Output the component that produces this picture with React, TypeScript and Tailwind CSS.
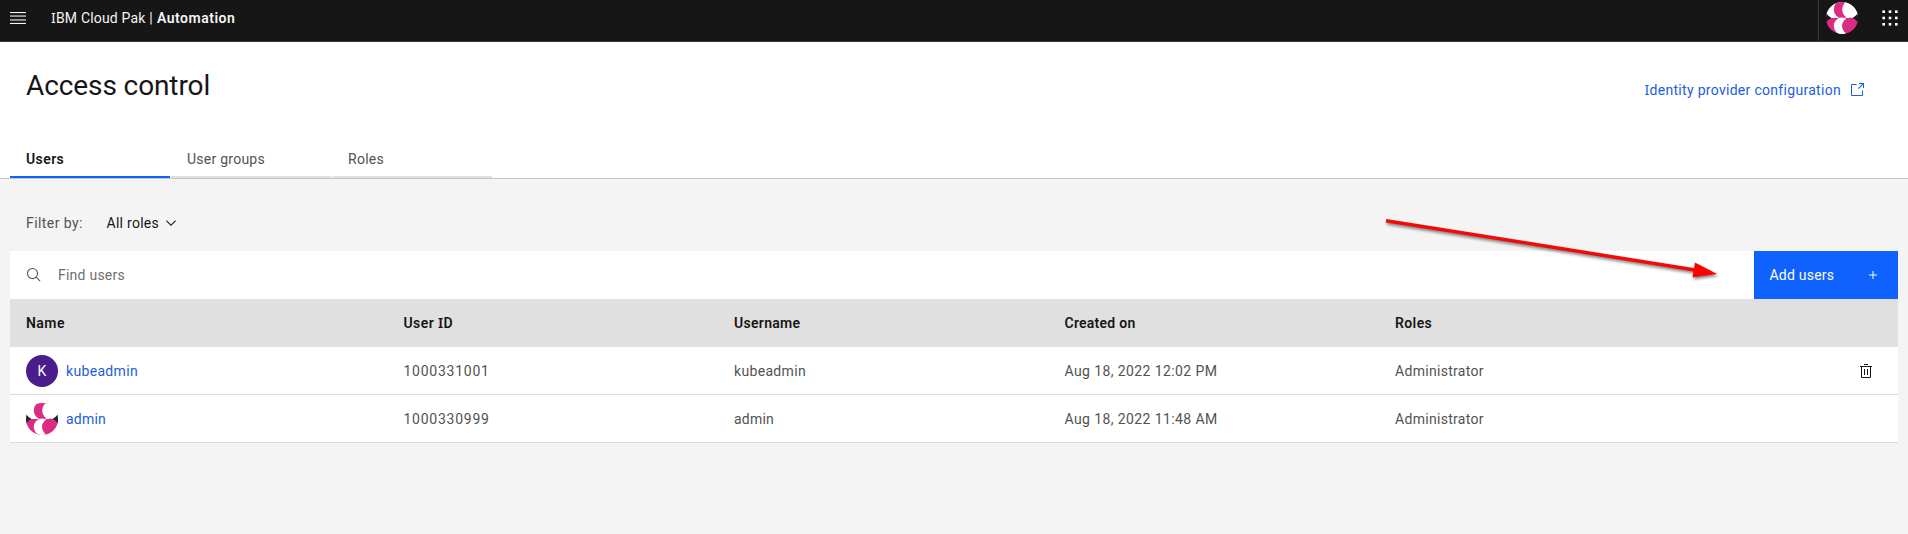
import React from "react";

function SerifI() {
  return <span className="font-['Noto_Sans',sans-serif] leading-none">I</span>;
}

function MenuIcon() {
  return (
    <svg className="h-4 w-4" viewBox="0 0 16 16" fill="#f4f4f4">
      <path d="M0 2h16v1.1H0z" />
      <path d="M0 5.5h16v1.1H0z" />
      <path d="M0 9.4h16v1.1H0z" />
      <path d="M0 12.9h16V14H0z" />
    </svg>
  );
}

function SwitcherIcon() {
  const steps = [0.4, 6.7, 13];
  return (
    <svg className="h-4 w-4" viewBox="0 0 16 16" fill="#ffffff">
      {steps.map((y) => steps.map((x) => <rect key={`${x}-${y}`} x={x} y={y} width="2.6" height="2.6" />))}
    </svg>
  );
}

function LaunchIcon() {
  return (
    <svg className="h-4 w-4" viewBox="0 0 32 32" fill="currentColor">
      <path d="M26 28H6a2 2 0 0 1-2-2V6a2 2 0 0 1 2-2h9v2H6v20h20v-9h2v9a2 2 0 0 1-2 2z" />
      <path d="M20 2v2h6.59L18 12.59 19.41 14 28 5.41V12h2V2H20z" />
    </svg>
  );
}

function ChevronIcon() {
  return (
    <svg className="h-4 w-4" viewBox="0 0 16 16" fill="#161616">
      <path d="M8 11L3 6l.7-.7L8 9.6l4.3-4.3.7.7z" />
    </svg>
  );
}

function SearchIcon() {
  return (
    <svg className="h-4 w-4" viewBox="0 0 32 32" fill="#525252">
      <path d="M29 27.586l-7.552-7.552a11.018 11.018 0 1 0-1.414 1.414L27.586 29zM4 13a9 9 0 1 1 9 9 9.01 9.01 0 0 1-9-9z" />
    </svg>
  );
}

function AddIcon() {
  return (
    <svg className="h-4 w-4" viewBox="0 0 32 32" fill="#ffffff">
      <path d="M17 15V8h-2v7H8v2h7v7h2v-7h7v-2z" />
    </svg>
  );
}

function TrashIcon() {
  return (
    <svg className="h-4 w-4" viewBox="0 0 32 32" fill="#161616">
      <path d="M12 12h2v12h-2zM18 12h2v12h-2z" />
      <path d="M4 6v2h2v20a2 2 0 0 0 2 2h16a2 2 0 0 0 2-2V8h2V6zm4 22V8h16v20zM12 2h8v2h-8z" />
    </svg>
  );
}

function Avatar({ id, wedge }: { id: string; wedge: string }) {
  return (
    <svg className="h-8 w-8 shrink-0" viewBox="0 0 32 32">
      <clipPath id={id}>
        <circle cx="16" cy="16" r="16" />
      </clipPath>
      <g clipPath={`url(#${id})`}>
        <rect width="32" height="16" fill="#ffffff" />
        <rect y="16" width="32" height="16" fill="#da2c82" />
        <ellipse cx="16.2" cy="7.4" rx="8.4" ry="9" fill="#da2c82" />
        <ellipse cx="24.6" cy="7.4" rx="8.4" ry="9.2" fill="#ffffff" />
        <ellipse cx="16" cy="24" rx="8.2" ry="8.4" fill="#ffffff" />
        <ellipse cx="24.4" cy="24" rx="8.4" ry="8.6" fill="#da2c82" />
        <path d="M-1 9.5Q1.5 14 5.5 16Q2 17-1 22.5z" fill={wedge} />
        <path d="M33 9.5Q30.5 14 26.5 16Q30 17 33 22.5z" fill={wedge} />
      </g>
    </svg>
  );
}

const grid = "grid grid-cols-[377.5px_330.5px_330.5px_330.5px_1fr]";

function Row({ avatar, name, link, id, created, trash }: { avatar: React.ReactNode; name: string; link: string; id: string; created: string; trash?: boolean }) {
  return (
    <div className={`${grid} h-12 items-center border-b border-[#dcdcdc] bg-white text-[#525252]`}>
      <div className="flex items-center gap-2 pl-4">
        {avatar}
        <a className={link}>{name}</a>
      </div>
      <div className="pl-4 tracking-[0.75px]">{id}</div>
      <div className={`pl-4 ${name === "admin" ? "tracking-[0.2px]" : "tracking-[0.33px]"}`}>{name}</div>
      <div className="pl-4 tracking-[0.4px]">{created}</div>
      <div className="flex items-center justify-between pl-4 pr-6">
        <span className="tracking-[0.3px]">Administrator</span>
        {trash && <TrashIcon />}
      </div>
    </div>
  );
}

export default function App() {
  return (
    <div className="relative flex h-[534px] w-[1908px] flex-col overflow-hidden bg-[#f4f4f4] font-['Roboto',sans-serif] text-sm text-[#161616]">
      <header className="flex h-[42px] items-start border-b border-[#393939] bg-[#161616] text-[#f4f4f4]">
        <div className="flex h-9 items-center pl-[10px]">
          <MenuIcon />
          <span className="ml-[25px] w-[106px] tracking-[0.18px]">
            <SerifI />BM Cloud Pak |
          </span>
          <span className="font-semibold tracking-[0.5px]">Automation</span>
        </div>
        <div className="ml-auto flex h-full items-start border-l border-[#393939]">
          <div className="flex h-[34px] items-end pl-[7px]">
            <Avatar id="header-avatar" wedge="#16191b" />
          </div>
          <div className="flex h-9 items-center pl-6 pr-[10px]">
            <SwitcherIcon />
          </div>
        </div>
      </header>

      <section className="flex h-[137px] flex-col justify-between border-b border-[#c6c6c6] bg-white">
        <div className="flex items-start justify-between pl-[26px] pr-[43px]">
          <h1 className="pt-[26px] text-[28px] leading-9 tracking-[-0.1px]">Access control</h1>
          <a className="flex items-center gap-2 pt-[38px] text-[#1b60dd]">
            <span className="tracking-[0.3px]">
              <SerifI />dentity provider configuration
            </span>
            <LaunchIcon />
          </a>
        </div>
        <nav className="flex gap-px pl-[10px] text-[#525252]">
          <div className="h-[29px] w-40 border-b-2 border-[#0f62fe] pl-4 font-semibold tracking-[0.4px] text-[#161616]">Users</div>
          <div className="h-[29px] w-40 border-b-2 border-[#e0e0e0] pl-4 tracking-[0.25px]">User groups</div>
          <div className="h-[29px] w-40 border-b-2 border-[#e0e0e0] pl-4 tracking-[0.26px]">Roles</div>
        </nav>
      </section>

      <main className="flex flex-col px-[10px]">
        <div className="flex h-[72px] items-center pl-4 pt-[16px]">
          <span className="w-[80.5px] tracking-[0.42px] text-[#525252]">Filter by:</span>
          <span className="w-[56.5px] tracking-[0.28px]">All roles</span>
          <ChevronIcon />
        </div>
        <div className="flex h-12 bg-white">
          <div className="flex flex-1 items-center gap-4 pl-4 text-[#6f6f6f]">
            <SearchIcon />
            <span className="tracking-[0.24px]">Find users</span>
          </div>
          <button className="flex w-36 items-center justify-between bg-[#0f62fe] pl-[15.5px] pr-[17px] tracking-[0.23px] text-white">
            Add users
            <AddIcon />
          </button>
        </div>
        <div className={`${grid} h-12 items-center bg-[#e0e0e0] font-semibold`}>
          <div className="pl-4 tracking-[0.45px]">Name</div>
          <div className="pl-4 tracking-[0.4px]">
            User <SerifI />D
          </div>
          <div className="pl-4 tracking-[0.3px]">Username</div>
          <div className="pl-4 tracking-[0.25px]">Created on</div>
          <div className="pl-4 tracking-[0.4px]">Roles</div>
        </div>
        <Row
          avatar={<div className="flex h-8 w-8 items-center justify-center rounded-full bg-[#491d8b] text-white">K</div>}
          name="kubeadmin"
          link="tracking-[0.33px] text-[#1b60dd]"
          id="1000331001"
          created="Aug 18, 2022 12:02 PM"
          trash
        />
        <Row
          avatar={<Avatar id="admin-avatar" wedge="#172a30" />}
          name="admin"
          link="tracking-[0.2px] text-[#1b60dd]"
          id="1000330999"
          created="Aug 18, 2022 11:48 AM"
        />
      </main>

      <svg className="pointer-events-none absolute left-[1380px] top-[212px] h-[76px] w-[346px] drop-shadow-[1px_2px_1.5px_rgba(0,0,0,0.5)]" viewBox="0 0 346 76">
        <path d="M6 8.7L315 58" stroke="#f00a0a" strokeWidth="3.5" />
        <path d="M315 50.5L337 62L312.5 65.2z" fill="#ff0000" />
      </svg>
    </div>
  );
}
